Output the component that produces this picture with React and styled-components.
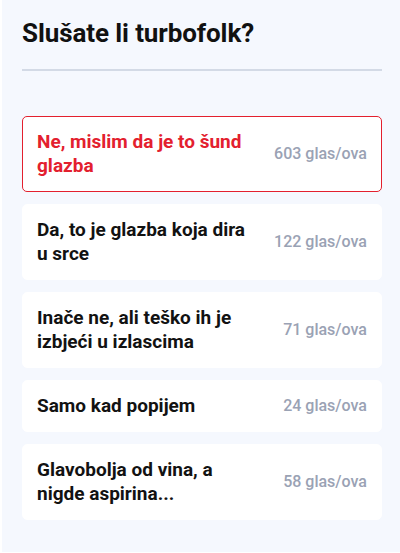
import React from "react";
import styled, { createGlobalStyle } from "styled-components";

const GlobalStyle = createGlobalStyle`
  html, body {
    margin: 0;
    padding: 0;
    background: #ffffff;
  }
  body {
    font-family: Roboto, "Liberation Sans", Arial, sans-serif;
  }
`;

const Panel = styled.div`
  margin-left: 2px;
  width: 398px;
  height: 552px;
  box-sizing: border-box;
  padding: 17px 18px 0 20px;
  background: #f5f8fe;
`;

const Title = styled.h2`
  margin: 0;
  font-size: 26px;
  line-height: 32px;
  font-weight: 700;
  color: #111111;
  letter-spacing: -0.1px;
`;

const Divider = styled.hr`
  margin: 20px 0 0;
  border: 0;
  height: 2px;
  background: #d3dae6;
`;

const List = styled.div`
  display: flex;
  flex-direction: column;
  gap: 12px;
  margin-top: 45px;
`;

const Option = styled.div`
  display: flex;
  align-items: center;
  justify-content: space-between;
  gap: 20px;
  padding: 13px 14px;
  background: #ffffff;
  border: 1px solid ${(props) => (props.selected ? "#e3202e" : "#ffffff")};
  border-radius: 5px;
`;

const Label = styled.div`
  flex: 1;
  max-width: 220px;
  font-size: 19px;
  line-height: 24px;
  font-weight: 700;
  color: ${(props) => (props.selected ? "#e3202e" : "#121212")};
`;

const Votes = styled.div`
  flex-shrink: 0;
  font-size: 16px;
  line-height: 24px;
  font-weight: 500;
  color: #9aa2b4;
`;

const options = [
  { text: "Ne, mislim da je to šund glazba", votes: 603, selected: true },
  { text: "Da, to je glazba koja dira u srce", votes: 122 },
  { text: "Inače ne, ali teško ih je izbjeći u izlascima", votes: 71 },
  { text: "Samo kad popijem", votes: 24 },
  { text: "Glavobolja od vina, a nigde aspirina...", votes: 58 },
];

const App = () => {
  return (
    <>
      <GlobalStyle />
      <Panel>
        <Title>Slušate li turbofolk?</Title>
        <Divider />
        <List>
          {options.map((option) => (
            <Option key={option.text} selected={option.selected}>
              <Label selected={option.selected}>{option.text}</Label>
              <Votes>{option.votes} glas/ova</Votes>
            </Option>
          ))}
        </List>
      </Panel>
    </>
  );
};

export default App;
